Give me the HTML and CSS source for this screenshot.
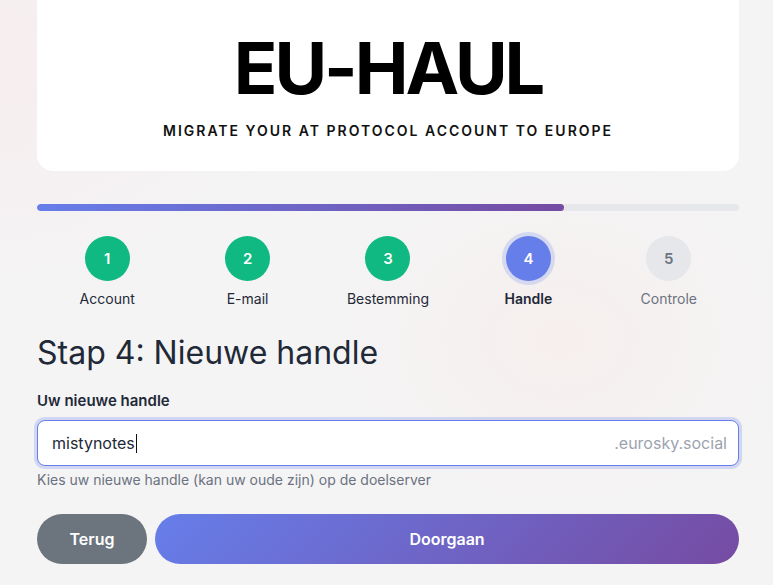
FILE: index.html
```html
<!DOCTYPE html>
<html lang="nl">
<head>
<meta charset="utf-8">
<title>EU-HAUL</title>
<link rel="stylesheet" href="styles.css">
</head>
<body>
<div class="page">
  <header class="hero">
    <h1 class="title">EU-HAUL</h1>
    <p class="subtitle">MIGRATE YOUR AT PROTOCOL ACCOUNT TO EUROPE</p>
  </header>

  <div class="progress"><div class="progress-fill" style="width:75%"></div></div>

  <ol class="steps">
    <li class="step done"><span class="dot">1</span><span class="label">Account</span></li>
    <li class="step done"><span class="dot">2</span><span class="label">E-mail</span></li>
    <li class="step done"><span class="dot">3</span><span class="label">Bestemming</span></li>
    <li class="step active"><span class="dot">4</span><span class="label">Handle</span></li>
    <li class="step todo"><span class="dot">5</span><span class="label">Controle</span></li>
  </ol>

  <h2 class="heading">Stap 4: Nieuwe handle</h2>

  <label class="field-label" for="handle">Uw nieuwe handle</label>
  <div class="input-wrap">
    <span class="input-text">mistynotes<span class="caret"></span></span>
    <span class="suffix">.eurosky.social</span>
  </div>
  <p class="hint">Kies uw nieuwe handle (kan uw oude zijn) op de doelserver</p>

  <div class="actions">
    <button class="btn btn-back">Terug</button>
    <button class="btn btn-next">Doorgaan</button>
  </div>
</div>
</body>
</html>
```
FILE: styles.css
```css
* { box-sizing: border-box; }
html, body { margin: 0; padding: 0; }
body {
  font-family: Inter, "Noto Sans", sans-serif;
  color: #1f2937;
  background:
    radial-gradient(ellipse 300px 250px at 0px 60px, rgba(250, 225, 225, 0.35), transparent),
    radial-gradient(ellipse 260px 200px at 560px 340px, rgba(250, 230, 225, 0.35), transparent),
    #f4f4f5;
  min-height: 585px;
  overflow: hidden;
}
.page {
  width: 702px;
  margin: 0 0 0 37px;
  display: flex;
  flex-direction: column;
}
.hero {
  background: #fff;
  border-radius: 16px;
  margin-top: -20px;
  padding: 52px 20px 32px;
  text-align: center;
}
.title {
  margin: 0;
  font-family: Inter, sans-serif;
  font-weight: 700;
  font-size: 72px;
  line-height: 72px;
  letter-spacing: -3px;
  color: #000;
}
.subtitle {
  margin: 19px 0 0;
  font-size: 14px;
  font-weight: 600;
  letter-spacing: 2px;
  color: #111;
  line-height: 16px;
}
.progress {
  margin-top: 33px;
  height: 7px;
  border-radius: 4px;
  background: #e5e7eb;
  overflow: hidden;
}
.progress-fill {
  height: 100%;
  border-radius: 4px;
  background: linear-gradient(90deg, #667eea, #764ba2);
}
.steps {
  list-style: none;
  margin: 25px 0 0;
  padding: 0;
  display: grid;
  grid-template-columns: repeat(5, 1fr);
}
.step {
  display: flex;
  flex-direction: column;
  align-items: center;
  gap: 9px;
}
.dot {
  width: 45px;
  height: 45px;
  border-radius: 50%;
  display: flex;
  align-items: center;
  justify-content: center;
  font-size: 15px;
  font-weight: 600;
  color: #fff;
}
.label {
  font-size: 14px;
  line-height: 17px;
  color: #1f2937;
}
.done .dot { background: #10b981; }
.active .dot { background: #667eea; box-shadow: 0 0 0 4px rgba(102, 126, 234, 0.22); }
.active .label { font-weight: 600; }
.todo .dot { background: #e5e7eb; color: #6b7280; }
.todo .label { color: #6b7280; }
.heading {
  margin: 27px 0 0;
  font-size: 32px;
  line-height: 38px;
  font-weight: 400;
  color: #1f2937;
}
.field-label {
  margin-top: 20px;
  font-size: 15px;
  line-height: 18px;
  font-weight: 600;
  color: #1f2937;
}
.input-wrap {
  margin-top: 10px;
  height: 46px;
  background: #fff;
  border: 1px solid #667eea;
  border-radius: 8px;
  box-shadow: 0 0 0 3px rgba(102, 126, 234, 0.25);
  display: flex;
  align-items: center;
  justify-content: space-between;
  padding: 0 11px 0 14px;
  font-size: 16px;
}
.input-text { color: #1f2937; display: flex; align-items: center; }
.caret { display: inline-block; width: 1px; height: 19px; background: #111; margin-left: 1px; }
.suffix { color: #9ca3af; }
.hint {
  margin: 5px 0 0;
  font-size: 14px;
  line-height: 17px;
  color: #6b7280;
}
.actions {
  margin-top: 26px;
  display: flex;
  gap: 8px;
}
.btn {
  height: 50px;
  border: 0;
  border-radius: 25px;
  color: #fff;
  font-family: Inter, sans-serif;
  font-size: 16px;
  font-weight: 600;
}
.btn-back { width: 110px; background: #6c757d; }
.btn-next { flex: 1; background: linear-gradient(135deg, #667eea, #764ba2); }
```
